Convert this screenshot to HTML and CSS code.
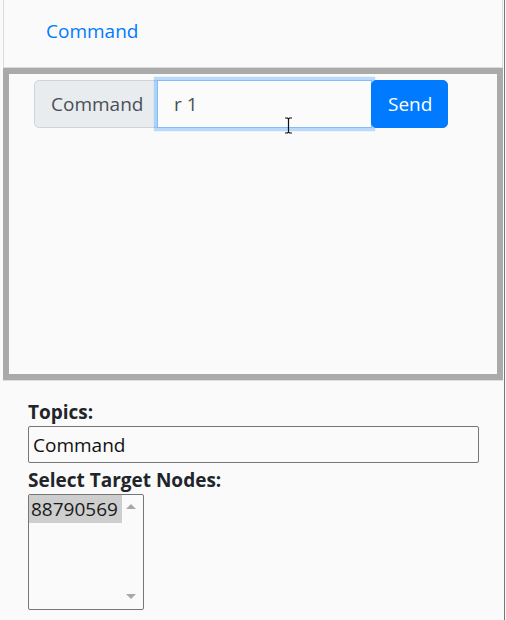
FILE: index.html
```html
<!DOCTYPE html>
<html lang="en">
<head>
<meta charset="utf-8">
<title>Command</title>
<link rel="stylesheet" href="styles.css">
</head>
<body>
<div class="page">
  <div class="top-card">
    <a class="top-link" href="#">Command</a>
  </div>
  <div class="console">
    <div class="cmd-group">
      <span class="cmd-label">Command</span>
      <input class="cmd-input" type="text" value="r 1">
      <button class="cmd-send" type="button">Send</button>
    </div>
    <svg class="ibeam" width="9" height="17" viewBox="0 0 9 17" aria-hidden="true">
      <path d="M1 1h2.5l1 1 1-1H8M4.5 2v13M1 16h2.5l1-1 1 1H8" fill="none" stroke="#111" stroke-width="1.2"/>
    </svg>
  </div>
  <div class="options">
    <label class="field-label">Topics:</label>
    <input class="topic-input" type="text" value="Command">
    <label class="field-label">Select Target Nodes:</label>
    <div class="listbox">
      <div class="list-items">
        <div class="list-option selected">88790569</div>
      </div>
      <div class="list-scroll">
        <span class="arrow up"></span>
        <span class="arrow down"></span>
      </div>
    </div>
  </div>
</div>
</body>
</html>
```

FILE: styles.css
```css
html, body {
  margin: 0;
  padding: 0;
  background: #fafafa;
}

body {
  font-family: "Open Sans", "Noto Sans", sans-serif;
  font-size: 19px;
  color: #212529;
}

.page {
  width: 505px;
  min-height: 620px;
  box-sizing: border-box;
  padding-left: 3px;
  padding-right: 1px;
  border-right: 1px solid #767676;
}

.top-card {
  width: 500px;
  box-sizing: border-box;
  height: 68px;
  padding: 18px 0 25px 42px;
  border: 1px solid #dcdcdc;
  border-top: none;
}

.top-link {
  display: inline-block;
  line-height: 24px;
  color: #007bff;
  text-decoration: none;
}

.console {
  position: relative;
  width: 500px;
  height: 312px;
  box-sizing: border-box;
  border: 6px solid #aaaaaa;
  padding: 6px 0 0 25px;
  box-shadow: 0 1px 0 #dedede;
}

.cmd-group {
  display: flex;
  height: 48px;
}

.cmd-label {
  display: flex;
  align-items: center;
  box-sizing: border-box;
  width: 124px;
  height: 48px;
  padding: 0 16px;
  background: #e9ecef;
  border: 1px solid #ced4da;
  border-radius: 5px 0 0 5px;
  color: #495057;
  line-height: 30px;
}

.cmd-input {
  position: relative;
  z-index: 1;
  box-sizing: border-box;
  width: 215px;
  height: 48px;
  margin: 0 0 0 -1px;
  padding: 0 16px;
  border: 1px solid #80bdff;
  border-radius: 0;
  background: #fbfbfb;
  color: #495057;
  font-family: inherit;
  font-size: 19px;
  outline: none;
  box-shadow: 0 0 0 3.2px rgba(0, 123, 255, 0.25);
}

.cmd-send {
  position: relative;
  z-index: 2;
  box-sizing: border-box;
  width: 77px;
  height: 48px;
  margin-left: -1px;
  padding: 0 16px;
  border: 1px solid #007bff;
  border-radius: 5px;
  background: #007bff;
  color: #ffffff;
  font-family: inherit;
  font-size: 19px;
}

.ibeam {
  position: absolute;
  left: 275px;
  top: 43px;
  z-index: 3;
}

.options {
  padding: 20px 0 0 25px;
}

.field-label {
  display: block;
  font-weight: 700;
  line-height: 24px;
  margin-bottom: 2px;
  color: #212529;
}

.topic-input {
  display: block;
  box-sizing: border-box;
  width: 451px;
  height: 37px;
  margin: 0 0 5px 0;
  padding: 0 4px;
  border: 1px solid #767676;
  border-radius: 2px;
  background: #fafafa;
  color: #111;
  font-family: inherit;
  font-size: 19px;
}

.listbox {
  display: flex;
  box-sizing: border-box;
  width: 116px;
  height: 116px;
  margin-top: 1px;
  border: 1px solid #767676;
  border-radius: 2px;
  background: #fafafa;
}

.list-items {
  flex: 1;
}

.list-option {
  height: 28px;
  line-height: 28px;
  padding-left: 2px;
  color: #1a1a1a;
}

.list-option.selected {
  background: #cecece;
}

.list-scroll {
  position: relative;
  width: 21px;
}

.arrow {
  position: absolute;
  left: 4px;
  width: 0;
  height: 0;
  border-left: 5px solid transparent;
  border-right: 5px solid transparent;
}

.arrow.up {
  top: 9px;
  border-bottom: 5px solid #a8a8a8;
}

.arrow.down {
  top: 99px;
  border-top: 5px solid #a8a8a8;
}
```
